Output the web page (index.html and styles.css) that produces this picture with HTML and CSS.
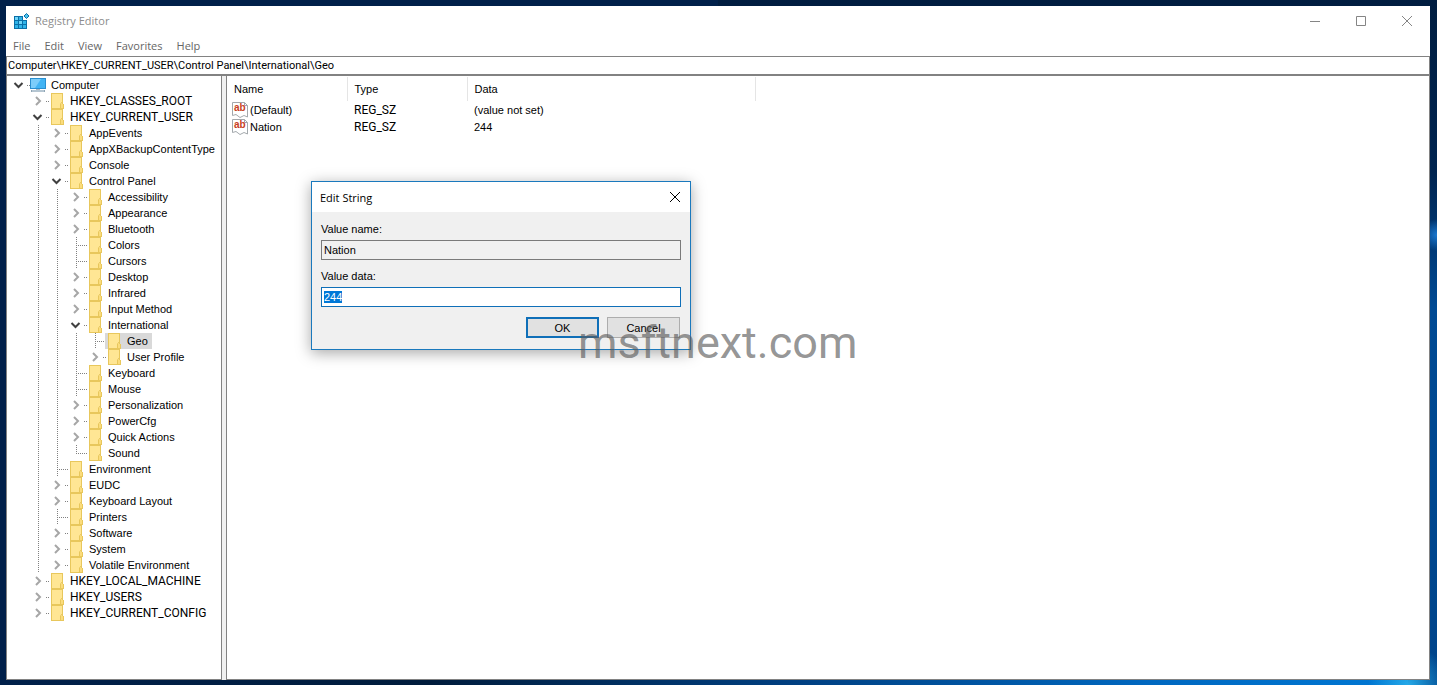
FILE: index.html
```html
<!DOCTYPE html>
<html lang="en">
<head>
    <meta charset="UTF-8">
    <meta name="viewport" content="width=device-width, initial-scale=1.0">
    <title>Registry Editor</title>
    <link rel="stylesheet" href="styles.css">
</head>
<body>
    <svg class="sprite" aria-hidden="true">
        <symbol id="right" viewBox="0 0 12 16">
            <path d="M4 4 L8 8 L4 12" fill="none" stroke="#a6a6a6" stroke-width="2"/>
        </symbol>
        <symbol id="down" viewBox="0 0 12 16">
            <path d="M1.5 6 L5.5 10 L9.5 6" fill="none" stroke="#404040" stroke-width="2"/>
        </symbol>
        <symbol id="folder" viewBox="0 0 16 16">
            <path d="M2 0 H14 V11 H15 V16 H2 Z" fill="#e8c75c"/>
            <path d="M3 1 H13 V15 H3 Z" fill="#ffe694"/>
            <path d="M12 11 H14 V15 H12 Z" fill="#fbdc7c"/>
            <path d="M11.5 15 V11 L13 9" fill="none" stroke="#e8c75c"/>
        </symbol>
        <symbol id="computer" viewBox="0 0 16 16">
            <rect x="0" y="1" width="16" height="11" fill="#2a8fd0"/>
            <rect x="1" y="2" width="14" height="9" fill="#42b4f4"/>
            <path d="M1 2 H11 L5 11 H1 Z" fill="#7ccdfa"/>
            <path d="M6 12 H10 V13 H6 Z" fill="#a9b8c4"/>
            <path d="M1 13 H15 V15 H1 Z" fill="#8fa5b5"/>
            <path d="M2 14 H14" stroke="#dbe6ee"/>
        </symbol>
        <symbol id="page" viewBox="0 0 16 16">
            <path d="M0.5 0.5 H12.5 L15.5 3.5 V15 L12 13.5 L8 15.5 L4 12.5 L0.5 13.5 Z" fill="#ffffff" stroke="#a3a8ac"/>
            <path d="M12.5 0.5 V3.5 H15.5" fill="none" stroke="#a3a8ac"/>
        </symbol>
    </svg>

    <main class="window">
        <header class="titlebar">
            <svg class="app-icon" viewBox="0 0 16 16" aria-hidden="true">
                <path d="M0 3 H9 V7 H13 V16 H0 Z" fill="#0a6fa8"/>
                <path d="M1 4 H4 V7 H1 Z M5 4 H8 V7 H5 Z M1 8 H4 V11 H1 Z M5 8 H8 V11 H5 Z M9 8 H12 V11 H9 Z M1 12 H4 V15 H1 Z M5 12 H8 V15 H5 Z M9 12 H12 V15 H9 Z" fill="#2fb3e8"/>
                <path d="M1 4 H4 V7 H1 Z M5 8 H8 V11 H5 Z" fill="#6fd4f7"/>
                <path d="M12.5 0.5 L15 3 L12.5 5.5 L10 3 Z" fill="#4cc4ee" stroke="#0a6fa8"/>
            </svg>
            <h1>Registry Editor</h1>
            <button class="caption" aria-label="Minimize"><svg viewBox="0 0 12 12"><path d="M1 6.5 H11"/></svg></button>
            <button class="caption" aria-label="Maximize"><svg viewBox="0 0 12 12"><path d="M1.5 1.5 H10.5 V10.5 H1.5 Z"/></svg></button>
            <button class="caption" aria-label="Close"><svg viewBox="0 0 12 12"><path d="M1 1 L11 11 M11 1 L1 11"/></svg></button>
        </header>
        <nav class="menu">
            <button>File</button>
            <button>Edit</button>
            <button>View</button>
            <button>Favorites</button>
            <button>Help</button>
        </nav>
        <input class="address" type="text" aria-label="Address" value="Computer\HKEY_CURRENT_USER\Control Panel\International\Geo">

        <div class="panes">
            <ul class="tree">
                <li>
                    <div class="row"><button class="toggle" aria-label="Collapse"><svg><use href="#down"/></svg></button><button class="key"><svg><use href="#computer"/></svg>Computer</button></div>
                    <ul>
                        <li><div class="row hive"><button class="toggle" aria-label="Expand"><svg><use href="#right"/></svg></button><button class="key"><svg><use href="#folder"/></svg>HKEY_CLASSES_ROOT</button></div></li>
                        <li>
                            <div class="row hive"><button class="toggle" aria-label="Collapse"><svg><use href="#down"/></svg></button><button class="key"><svg><use href="#folder"/></svg>HKEY_CURRENT_USER</button></div>
                            <ul class="line">
                                <li><div class="row"><button class="toggle" aria-label="Expand"><svg><use href="#right"/></svg></button><button class="key"><svg><use href="#folder"/></svg>AppEvents</button></div></li>
                                <li><div class="row"><button class="toggle" aria-label="Expand"><svg><use href="#right"/></svg></button><button class="key"><svg><use href="#folder"/></svg>AppXBackupContentType</button></div></li>
                                <li><div class="row"><button class="toggle" aria-label="Expand"><svg><use href="#right"/></svg></button><button class="key"><svg><use href="#folder"/></svg>Console</button></div></li>
                                <li>
                                    <div class="row"><button class="toggle" aria-label="Collapse"><svg><use href="#down"/></svg></button><button class="key"><svg><use href="#folder"/></svg>Control Panel</button></div>
                                    <ul class="line">
                                        <li><div class="row"><button class="toggle" aria-label="Expand"><svg><use href="#right"/></svg></button><button class="key"><svg><use href="#folder"/></svg>Accessibility</button></div></li>
                                        <li><div class="row"><button class="toggle" aria-label="Expand"><svg><use href="#right"/></svg></button><button class="key"><svg><use href="#folder"/></svg>Appearance</button></div></li>
                                        <li><div class="row"><button class="toggle" aria-label="Expand"><svg><use href="#right"/></svg></button><button class="key"><svg><use href="#folder"/></svg>Bluetooth</button></div></li>
                                        <li><div class="row leaf"><button class="key"><svg><use href="#folder"/></svg>Colors</button></div></li>
                                        <li><div class="row leaf"><button class="key"><svg><use href="#folder"/></svg>Cursors</button></div></li>
                                        <li><div class="row"><button class="toggle" aria-label="Expand"><svg><use href="#right"/></svg></button><button class="key"><svg><use href="#folder"/></svg>Desktop</button></div></li>
                                        <li><div class="row"><button class="toggle" aria-label="Expand"><svg><use href="#right"/></svg></button><button class="key"><svg><use href="#folder"/></svg>Infrared</button></div></li>
                                        <li><div class="row"><button class="toggle" aria-label="Expand"><svg><use href="#right"/></svg></button><button class="key"><svg><use href="#folder"/></svg>Input Method</button></div></li>
                                        <li>
                                            <div class="row"><button class="toggle" aria-label="Collapse"><svg><use href="#down"/></svg></button><button class="key"><svg><use href="#folder"/></svg>International</button></div>
                                            <ul class="line">
                                                <li><div class="row leaf"><button class="key selected"><svg><use href="#folder"/></svg>Geo</button></div></li>
                                                <li><div class="row"><button class="toggle" aria-label="Expand"><svg><use href="#right"/></svg></button><button class="key"><svg><use href="#folder"/></svg>User Profile</button></div></li>
                                            </ul>
                                        </li>
                                        <li><div class="row leaf"><button class="key"><svg><use href="#folder"/></svg>Keyboard</button></div></li>
                                        <li><div class="row leaf"><button class="key"><svg><use href="#folder"/></svg>Mouse</button></div></li>
                                        <li><div class="row"><button class="toggle" aria-label="Expand"><svg><use href="#right"/></svg></button><button class="key"><svg><use href="#folder"/></svg>Personalization</button></div></li>
                                        <li><div class="row"><button class="toggle" aria-label="Expand"><svg><use href="#right"/></svg></button><button class="key"><svg><use href="#folder"/></svg>PowerCfg</button></div></li>
                                        <li><div class="row"><button class="toggle" aria-label="Expand"><svg><use href="#right"/></svg></button><button class="key"><svg><use href="#folder"/></svg>Quick Actions</button></div></li>
                                        <li><div class="row leaf last"><button class="key"><svg><use href="#folder"/></svg>Sound</button></div></li>
                                    </ul>
                                </li>
                                <li><div class="row leaf"><button class="key"><svg><use href="#folder"/></svg>Environment</button></div></li>
                                <li><div class="row"><button class="toggle" aria-label="Expand"><svg><use href="#right"/></svg></button><button class="key"><svg><use href="#folder"/></svg>EUDC</button></div></li>
                                <li><div class="row"><button class="toggle" aria-label="Expand"><svg><use href="#right"/></svg></button><button class="key"><svg><use href="#folder"/></svg>Keyboard Layout</button></div></li>
                                <li><div class="row leaf"><button class="key"><svg><use href="#folder"/></svg>Printers</button></div></li>
                                <li><div class="row"><button class="toggle" aria-label="Expand"><svg><use href="#right"/></svg></button><button class="key"><svg><use href="#folder"/></svg>Software</button></div></li>
                                <li><div class="row"><button class="toggle" aria-label="Expand"><svg><use href="#right"/></svg></button><button class="key"><svg><use href="#folder"/></svg>System</button></div></li>
                                <li><div class="row"><button class="toggle" aria-label="Expand"><svg><use href="#right"/></svg></button><button class="key"><svg><use href="#folder"/></svg>Volatile Environment</button></div></li>
                            </ul>
                        </li>
                        <li><div class="row hive"><button class="toggle" aria-label="Expand"><svg><use href="#right"/></svg></button><button class="key"><svg><use href="#folder"/></svg>HKEY_LOCAL_MACHINE</button></div></li>
                        <li><div class="row hive"><button class="toggle" aria-label="Expand"><svg><use href="#right"/></svg></button><button class="key"><svg><use href="#folder"/></svg>HKEY_USERS</button></div></li>
                        <li><div class="row hive"><button class="toggle" aria-label="Expand"><svg><use href="#right"/></svg></button><button class="key"><svg><use href="#folder"/></svg>HKEY_CURRENT_CONFIG</button></div></li>
                    </ul>
                </li>
            </ul>

            <section class="values">
                <table>
                    <thead>
                        <tr>
                            <th>Name</th>
                            <th>Type</th>
                            <th class="wide">Data</th>
                        </tr>
                    </thead>
                    <tbody>
                        <tr>
                            <td><span class="value"><svg viewBox="0 0 16 16"><use href="#page"/><text class="ab" x="2" y="9">ab</text></svg>(Default)</span></td>
                            <td class="kind">REG_SZ</td>
                            <td>(value not set)</td>
                        </tr>
                        <tr>
                            <td><span class="value"><svg viewBox="0 0 16 16"><use href="#page"/><text class="ab" x="2" y="9">ab</text></svg>Nation</span></td>
                            <td class="kind">REG_SZ</td>
                            <td>244</td>
                        </tr>
                    </tbody>
                </table>
            </section>
        </div>
    </main>

    <form class="dialog" role="dialog" aria-labelledby="dialogTitle">
        <div class="dialog-title">
            <h2 id="dialogTitle">Edit String</h2>
            <button type="button" class="close" aria-label="Close"><svg viewBox="0 0 12 12"><path d="M1 1 L11 11 M11 1 L1 11"/></svg></button>
        </div>
        <div class="dialog-body">
            <label for="valueName">Value name:</label>
            <input type="text" id="valueName" value="Nation" readonly>
            <label for="valueData">Value data:</label>
            <input type="text" id="valueData" value="244" onfocus="this.select()" autofocus>
            <div class="actions">
                <button type="submit" class="default">OK</button>
                <button type="button">Cancel</button>
            </div>
        </div>
    </form>

    <div class="watermark">msftnext.com</div>
</body>
</html>
```

FILE: styles.css
```css
* {
    box-sizing: border-box;
}

body {
    margin: 0;
    min-height: 100vh;
    padding: 6px 7px 5px 6px;
    display: flex;
    font-family: "Liberation Sans", Arial, sans-serif;
    font-size: 11px;
    color: #000000;
    background:
        radial-gradient(circle at 100% 235px, #1a78d0 0, transparent 16px),
        radial-gradient(circle at 98% 100%, #25a9e8 0, transparent 40px),
        linear-gradient(90deg, #00204a 0, #001c3c 30%, #003f80 55%, #0068c0 80%, #0078d4 98%, transparent 98%) bottom / 100% 6px no-repeat,
        linear-gradient(90deg, #00204a 50%, transparent 50%),
        linear-gradient(180deg, #001d40 0, #002450 25%, #004a94 45%, #00448a 100%);
}

button,
input {
    font: inherit;
    color: inherit;
}

button {
    border: 0;
    padding: 0;
    background: none;
}

h1,
h2 {
    margin: 0;
    font-weight: normal;
    font-size: 11px;
}

.sprite {
    position: absolute;
    width: 0;
    height: 0;
}

.window {
    flex: 1;
    display: flex;
    flex-direction: column;
    background: #ffffff;
}

/* title bar and menu */

.titlebar {
    display: flex;
    align-items: center;
    height: 29px;
    padding-left: 8px;
    font-family: "Open Sans", "Noto Sans", sans-serif;
    color: #8c8c8c;
}

.titlebar h1 {
    flex: 1;
    padding-left: 5px;
}

.app-icon {
    width: 16px;
    height: 16px;
}

.caption {
    width: 46px;
    height: 28px;
    display: flex;
    align-items: center;
    justify-content: center;
}

.caption svg,
.close svg {
    width: 12px;
    height: 12px;
    fill: none;
    stroke: #858585;
}

.menu {
    display: flex;
    gap: 14px;
    height: 21px;
    padding-left: 7px;
    font-family: "Open Sans", "Noto Sans", sans-serif;
    color: #666666;
}

.address {
    width: 100%;
    height: 20px;
    padding: 0 1px;
    border: 1px solid #828282;
    border-bottom-width: 2px;
    border-radius: 0;
    outline: 0;
    font-family: Roboto, sans-serif;
    background: #ffffff;
}

/* panes */

.panes {
    flex: 1;
    display: flex;
    gap: 4px;
    background: #f0f0f0;
}

.tree,
.values {
    border: 1px solid #828282;
    border-top: 0;
    background: #ffffff;
}

.tree {
    width: 216px;
    margin: 0;
    padding: 1px 0 0 6px;
    list-style: none;
}

.tree ul {
    margin: 0;
    padding: 0 0 0 19px;
    list-style: none;
}

.tree .line {
    background: repeating-linear-gradient(180deg, #808080 0, #808080 1px, transparent 1px, transparent 2px) 6px 0 / 1px 100% no-repeat;
}

.row {
    display: flex;
    height: 16px;
    padding-right: 4px;
    background: repeating-linear-gradient(90deg, #808080 0, #808080 1px, transparent 1px, transparent 2px) 14px 8px / 4px 1px no-repeat;
}

.hive,
.kind {
    font-family: Roboto, sans-serif;
    font-size: 12px;
}

.toggle {
    width: 12px;
    height: 16px;
    margin-right: 4px;
}

.toggle svg {
    display: block;
    width: 12px;
    height: 16px;
}

.leaf {
    padding-left: 16px;
    background:
        repeating-linear-gradient(180deg, #808080 0, #808080 1px, transparent 1px, transparent 2px) 6px 0 / 1px 100% no-repeat,
        repeating-linear-gradient(90deg, #808080 0, #808080 1px, transparent 1px, transparent 2px) 8px 8px / 10px 1px no-repeat;
}

.last {
    background-size: 1px 9px, 10px 1px;
}

.key {
    display: flex;
    align-items: center;
    gap: 5px;
    padding: 0 4px 0 1px;
    white-space: nowrap;
}

.key svg,
.value svg {
    flex: none;
    width: 16px;
    height: 16px;
}

.selected {
    background: #d9d9d9;
}

.values {
    flex: 1;
}

table {
    border-collapse: collapse;
    table-layout: fixed;
    margin-top: 1px;
}

th,
td {
    width: 120px;
    height: 17px;
    padding: 0 0 0 7px;
    font-weight: normal;
    text-align: left;
}

th {
    height: 24px;
    border-right: 1px solid #e5e5e5;
}

.wide {
    width: 288px;
}

.value {
    display: flex;
    align-items: center;
    gap: 2px;
    margin-left: -2px;
}

.ab {
    font: bold 10px "Liberation Sans", sans-serif;
    fill: #c8401e;
}

/* edit dialog */

.dialog {
    position: absolute;
    left: 311px;
    top: 181px;
    width: 380px;
    border: 1px solid #1a79bd;
    background: #f0f0f0;
    box-shadow: 0 3px 14px rgba(0, 0, 0, 0.35);
}

.dialog-title {
    display: flex;
    align-items: center;
    justify-content: space-between;
    height: 30px;
    padding: 0 9px 0 8px;
    font-family: "Open Sans", "Noto Sans", sans-serif;
    background: #ffffff;
}

.close {
    display: flex;
}

.close svg {
    stroke: #000000;
}

.dialog-body {
    display: flex;
    flex-direction: column;
    padding: 10px 9px 11px;
}

.dialog label {
    height: 18px;
    line-height: 15px;
}

.dialog input {
    height: 20px;
    margin-bottom: 9px;
    padding: 0 2px;
    border: 1px solid #7a7a7a;
    border-radius: 0;
    outline: 0;
    background: #f0f0f0;
}

.dialog #valueData {
    border-color: #0f6fb8;
    background: #ffffff;
}

.dialog input::selection {
    color: #ffffff;
    background: #0078d7;
}

.actions {
    display: flex;
    justify-content: flex-end;
    gap: 8px;
    padding: 1px 1px 0 0;
}

.actions button {
    width: 73px;
    height: 21px;
    border: 1px solid #adadad;
    background: #e1e1e1;
}

.actions .default {
    border: 2px solid #0f6fb8;
}

.watermark {
    position: absolute;
    left: 578px;
    top: 317px;
    font-family: Roboto, sans-serif;
    font-size: 45px;
    line-height: 52px;
    color: rgba(90, 90, 90, 0.65);
    pointer-events: none;
}
```
